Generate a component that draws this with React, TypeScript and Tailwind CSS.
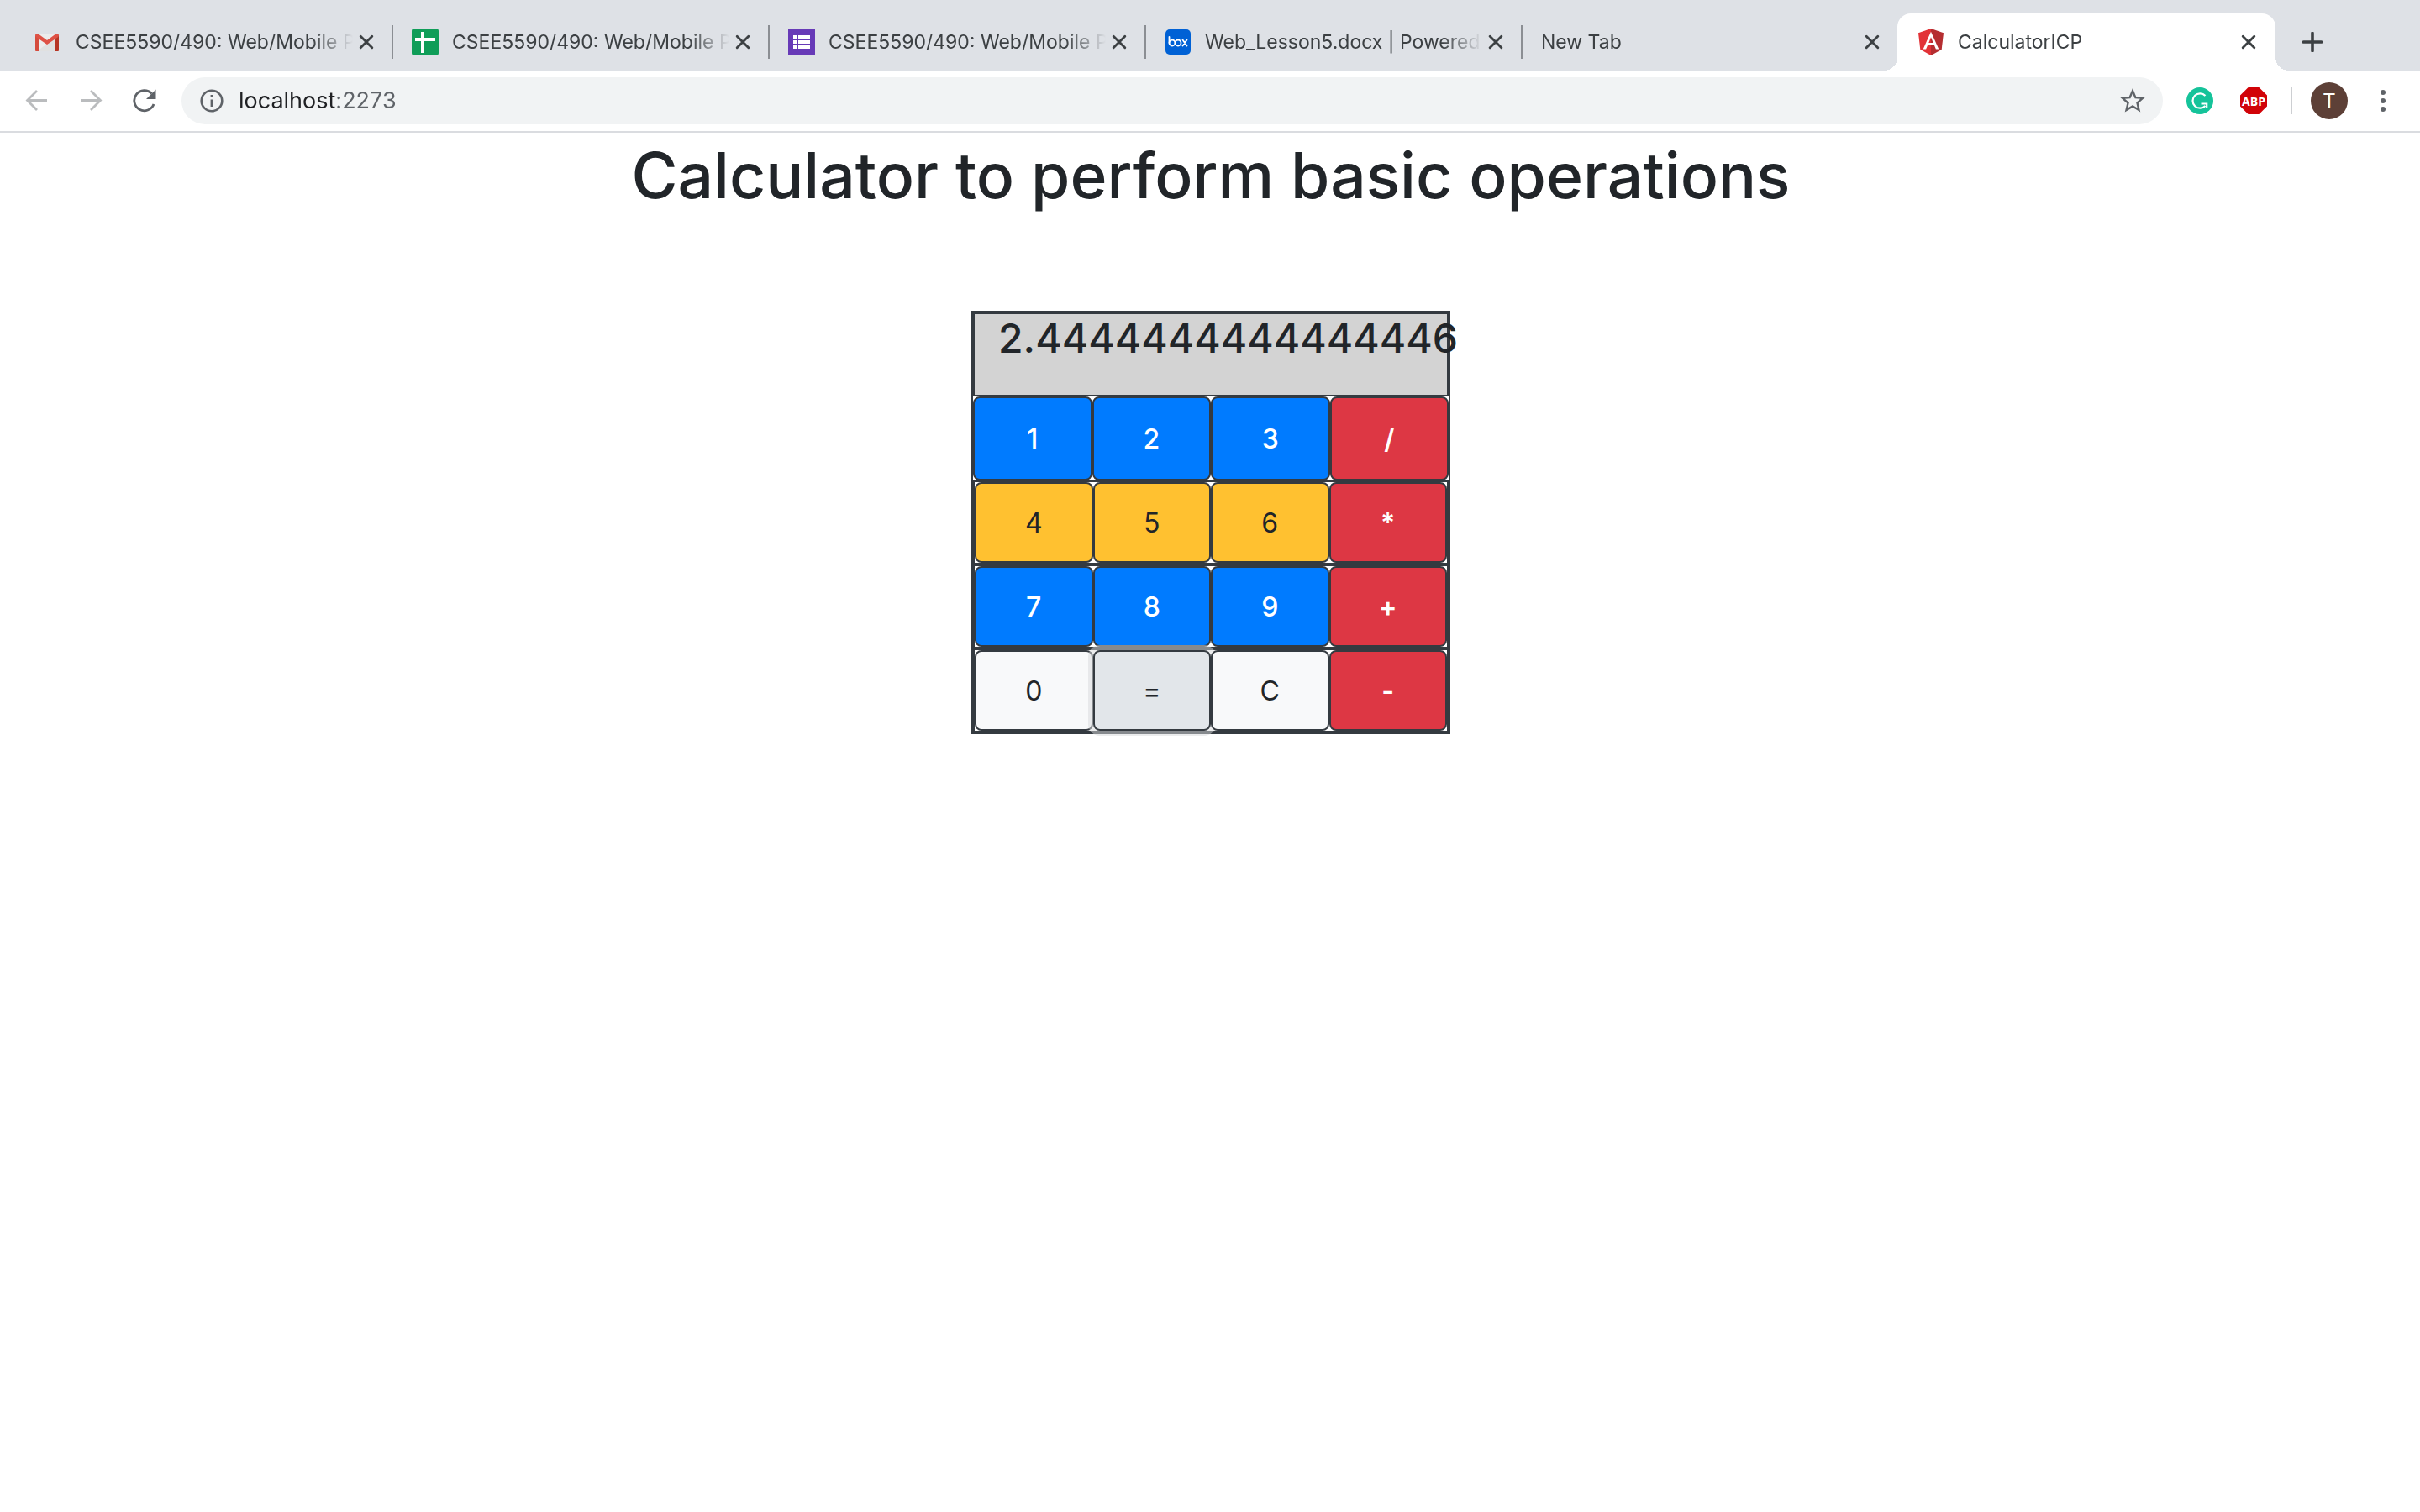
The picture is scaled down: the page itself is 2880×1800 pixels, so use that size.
import type { ReactNode } from "react";

function GmailIcon() {
  return (
    <svg width="32" height="32" viewBox="0 0 32 32" aria-hidden="true">
      <path d="M1 6h26v21H1z" fill="#ececec" />
      <path d="M2 27 14 18l12 9z" fill="#e0e0e0" />
      <path d="M14 18l12 9V10z" fill="#d8d8d8" opacity=".6" />
      <path d="M0 8v18a1 1 0 0 0 1 1h3V10z" fill="#d54b3d" />
      <path d="M28 8v18a1 1 0 0 1-1 1h-3V10z" fill="#b63524" />
      <path d="M2 6a2 2 0 0 0-2 2c0 1 .4 1.700 1 2.200L14 19l13-8.800c.6-.5 1-1.200 1-2.200a2 2 0 0 0-2-2h-1L14 14 3 6z" fill="#de5145" />
    </svg>
  );
}

function SheetsIcon() {
  return (
    <svg width="32" height="32" viewBox="0 0 32 32" aria-hidden="true">
      <rect width="32" height="32" rx="3" fill="#0f9d58" />
      <path d="M4 11h24v4H4zM11 4h4v25h-4z" fill="#fff" />
    </svg>
  );
}

function FormsIcon() {
  return (
    <svg width="32" height="32" viewBox="0 0 32 32" aria-hidden="true">
      <rect width="32" height="32" rx="1" fill="#673ab7" />
      <path d="M6 8h4v4H6zM12 8h14v4H12zM6 14h4v4H6zM12 14h14v4H12zM6 20h4v4H6zM12 20h14v4H12z" fill="#fff" />
    </svg>
  );
}

function BoxIcon() {
  return (
    <svg width="32" height="32" viewBox="0 0 32 32" aria-hidden="true">
      <rect x="1" y="1" width="30" height="30" rx="5" fill="#0061d5" />
      <g fill="none" stroke="#fff" strokeWidth="1.800" strokeLinecap="round">
        <path d="M5.500 10v7" />
        <circle cx="9" cy="17" r="3.500" />
        <circle cx="16" cy="17" r="3.500" />
        <path d="m21.500 13.500 5 7M26.500 13.500l-5 7" />
      </g>
    </svg>
  );
}

function AngularIcon() {
  return (
    <svg width="32" height="32" viewBox="0 0 32 32" aria-hidden="true">
      <path d="M16 0 1 5.300l2.300 19.600L16 32z" fill="#e23237" />
      <path d="m16 0 15 5.300-2.300 19.600L16 32z" fill="#b52e31" />
      <path d="M16 3.700 6.700 24.500h3.400l1.900-4.600h8l1.900 4.600h3.400zm0 6.600 2.700 6.700h-5.400z" fill="#fff" />
    </svg>
  );
}

function CloseIcon() {
  return (
    <svg width="18" height="18" viewBox="0 0 18 18" aria-hidden="true">
      <path d="m2.200 2.200 13.600 13.600M15.800 2.200 2.200 15.800" stroke="#3c4043" strokeWidth="2.900" strokeLinecap="round" />
    </svg>
  );
}

type TabInfo = { title: string; icon?: ReactNode };

const tabs: TabInfo[] = [
  { title: "CSEE5590/490: Web/Mobile P", icon: <GmailIcon /> },
  { title: "CSEE5590/490: Web/Mobile P", icon: <SheetsIcon /> },
  { title: "CSEE5590/490: Web/Mobile P", icon: <FormsIcon /> },
  { title: "Web_Lesson5.docx | Powered", icon: <BoxIcon /> },
  { title: "New Tab" },
];

function TabBody({ title, icon }: TabInfo) {
  return (
    <>
      <button type="button" className="flex min-w-0 flex-1 items-center gap-4 text-left text-[23px]">
        {icon && <span className="shrink-0">{icon}</span>}
        <span className="min-w-0 flex-1 overflow-hidden whitespace-nowrap [mask-image:linear-gradient(to_right,black_calc(100%-48px),transparent)]">
          {title}
        </span>
      </button>
      <button type="button" aria-label="Close tab" className="flex size-8 shrink-0 items-center justify-center">
        <CloseIcon />
      </button>
    </>
  );
}

function TabStrip() {
  return (
    <div className="flex h-[84px] items-end bg-[#dee1e6] pl-5 text-[#3c4043]">
      {tabs.map((tab, i) => (
        <div key={i} className="flex h-[68px] max-w-[448px] min-w-0 flex-1 items-center">
          <div className="flex min-w-0 flex-1 items-center pr-[14px] pl-[22px]">
            <TabBody {...tab} />
          </div>
          <span className={i < tabs.length - 1 ? "h-10 w-[2px] bg-[#8b8e93]" : "h-10 w-[2px]"} />
        </div>
      ))}
      <div className="relative -ml-[2px] flex h-[68px] max-w-[450px] min-w-0 flex-1 items-center rounded-t-[16px] bg-white pr-4 pl-6 before:absolute before:bottom-0 before:-left-4 before:size-4 before:bg-[radial-gradient(circle_at_0_0,transparent_16px,white_16px)] after:absolute after:-right-4 after:bottom-0 after:size-4 after:bg-[radial-gradient(circle_at_100%_0,transparent_16px,white_16px)]">
        <TabBody title="CalculatorICP" icon={<AngularIcon />} />
      </div>
      <button type="button" aria-label="New tab" className="ml-6 flex h-[68px] w-10 items-center justify-center">
        <svg width="24" height="24" viewBox="0 0 24 24" aria-hidden="true">
          <path d="M12 1.500v21M1.500 12h21" stroke="#3c4043" strokeWidth="3.600" strokeLinecap="round" />
        </svg>
      </button>
    </div>
  );
}

function Toolbar() {
  return (
    <div className="flex h-[74px] items-center border-b-2 border-[#dadce0] bg-white pr-6 pl-6">
      <div className="flex items-center gap-6">
        <button type="button" aria-label="Back" className="flex size-10 items-center justify-center">
          <svg width="28" height="28" viewBox="0 0 28 28" fill="none" aria-hidden="true">
            <path d="M26 13.500H2.500M14 2 2.500 13.500 14 25" stroke="#babcbe" strokeWidth="2.800" />
          </svg>
        </button>
        <button type="button" aria-label="Forward" className="flex size-10 items-center justify-center">
          <svg width="28" height="28" viewBox="0 0 28 28" fill="none" aria-hidden="true">
            <path d="M2 13.500h23.500M14 2l11.500 11.500L14 25" stroke="#babcbe" strokeWidth="2.800" />
          </svg>
        </button>
        <button type="button" aria-label="Reload" className="flex size-10 items-center justify-center">
          <svg width="28" height="28" viewBox="0 0 28 28" fill="none" aria-hidden="true">
            <path d="M25 18a12 12 0 1 1-2.500-12.500" stroke="#5f6368" strokeWidth="2.800" />
            <path d="M27.500.5v11.500H16z" fill="#5f6368" />
          </svg>
        </button>
      </div>
      <div className="ml-6 flex h-14 flex-1 items-center gap-3 rounded-full bg-[#f1f3f4] pr-4 pl-4">
        <button type="button" aria-label="View site information" className="flex size-10 items-center justify-center">
          <svg width="28" height="28" viewBox="0 0 28 28" fill="none" aria-hidden="true">
            <circle cx="14" cy="14" r="12.300" stroke="#5f6368" strokeWidth="2.600" />
            <path d="M12.600 12.500h2.800V21h-2.800zM12.600 7h2.800v2.800h-2.800z" fill="#5f6368" />
          </svg>
        </button>
        <input
          type="text"
          aria-label="Address"
          defaultValue="localhost:2273"
          className="min-w-0 flex-1 bg-[linear-gradient(to_right,#202124_116px,#5f6368_116px)] bg-clip-text text-[27px] leading-10 text-transparent outline-none"
        />
        <button type="button" aria-label="Bookmark this page" className="flex size-10 items-center justify-center">
          <svg width="36" height="36" viewBox="0 0 24 24" aria-hidden="true">
            <path
              d="M22 9.240l-7.190-.62L12 2 9.190 8.630 2 9.240l5.460 4.730L5.820 21 12 17.270 18.180 21l-1.630-7.030L22 9.240zM12 15.400l-3.760 2.270 1-4.280-3.320-2.880 4.380-.38L12 6.100l1.710 4.040 4.380.38-3.320 2.880 1 4.280L12 15.400z"
              fill="#5f6368"
            />
          </svg>
        </button>
      </div>
      <div className="ml-6 flex items-center">
        <button type="button" aria-label="Grammarly" className="flex size-10 items-center justify-center">
          <svg width="32" height="32" viewBox="0 0 32 32" fill="none" aria-hidden="true">
            <circle cx="16" cy="16" r="16" fill="#15c39a" />
            <path d="M22.500 10A8.700 8.700 0 1 0 22.500 22M17.500 19.500h6.700V25" stroke="#fff" strokeWidth="2.200" />
          </svg>
        </button>
        <button type="button" aria-label="Adblock Plus" className="ml-6 flex size-10 items-center justify-center">
          <span className="flex size-8 items-center justify-center bg-[#d10308] text-[14px] font-bold text-white [clip-path:polygon(30%_0,70%_0,100%_30%,100%_70%,70%_100%,30%_100%,0_70%,0_30%)]">
            <span className="font-['Open_Sans',sans-serif]">ABP</span>
          </span>
        </button>
        <span className="ml-6 h-8 w-[2px] bg-[#cdcfd2]" />
        <button
          type="button"
          aria-label="Profile"
          className="ml-[22px] flex size-11 items-center justify-center rounded-full bg-[#5d4037] font-[Roboto,sans-serif] text-[24px] text-white"
        >
          T
        </button>
        <button type="button" aria-label="Menu" className="ml-[22px] flex size-10 items-center justify-center">
          <svg width="8" height="28" viewBox="0 0 8 28" fill="#5f6368" aria-hidden="true">
            <circle cx="4" cy="4" r="3" />
            <circle cx="4" cy="14" r="3" />
            <circle cx="4" cy="24" r="3" />
          </svg>
        </button>
      </div>
    </div>
  );
}

const tone = {
  primary: "bg-[#007bff] font-medium text-white",
  warning: "bg-[#ffc130] text-[#212529]",
  danger: "bg-[#dd3744] font-semibold text-white",
  light: "bg-[#f8f9fa] text-[#212529]",
  active: "bg-[#e2e6ea] text-[#212529] shadow-[0_0_0_6px_rgba(216,217,219,0.5)]",
};

type Key = [label: string, tone: keyof typeof tone];

const rows: Key[][] = [
  [["1", "primary"], ["2", "primary"], ["3", "primary"], ["/", "danger"]],
  [["4", "warning"], ["5", "warning"], ["6", "warning"], ["*", "danger"]],
  [["7", "primary"], ["8", "primary"], ["9", "primary"], ["+", "danger"]],
  [["0", "light"], ["=", "active"], ["C", "light"], ["-", "danger"]],
];

function Calculator() {
  return (
    <section aria-label="Calculator" className="w-[570px] border-2 border-[#343a40] bg-white">
      <div className="h-[100px] border-2 border-[#343a40] bg-[#d3d3d3] pl-7">
        <output className="block text-[48px] leading-[58px] font-medium whitespace-nowrap">2.4444444444444446</output>
      </div>
      {rows.map((row, i) => (
        <div
          key={i}
          className={
            i === 0 ? "grid h-[100px] grid-cols-4" : "grid h-[100px] grid-cols-4 border-2 border-[#343a40]"
          }
        >
          {row.map(([label, t]) => (
            <button
              key={label}
              type="button"
              className={`rounded-lg border-2 border-[#343a40] pt-[2px] text-[32px] leading-[48px] ${tone[t]}`}
            >
              {label}
            </button>
          ))}
        </div>
      ))}
    </section>
  );
}

export default function App() {
  return (
    <div className="min-h-screen bg-white font-[Inter,sans-serif] text-[#212529]">
      <header>
        <TabStrip />
        <Toolbar />
      </header>
      <main className="flex flex-col items-center pl-[2px]">
        <h1 className="text-center text-[75px] leading-[102px] font-medium">Calculator to perform basic operations</h1>
        <div className="mt-[110px]">
          <Calculator />
        </div>
      </main>
    </div>
  );
}
